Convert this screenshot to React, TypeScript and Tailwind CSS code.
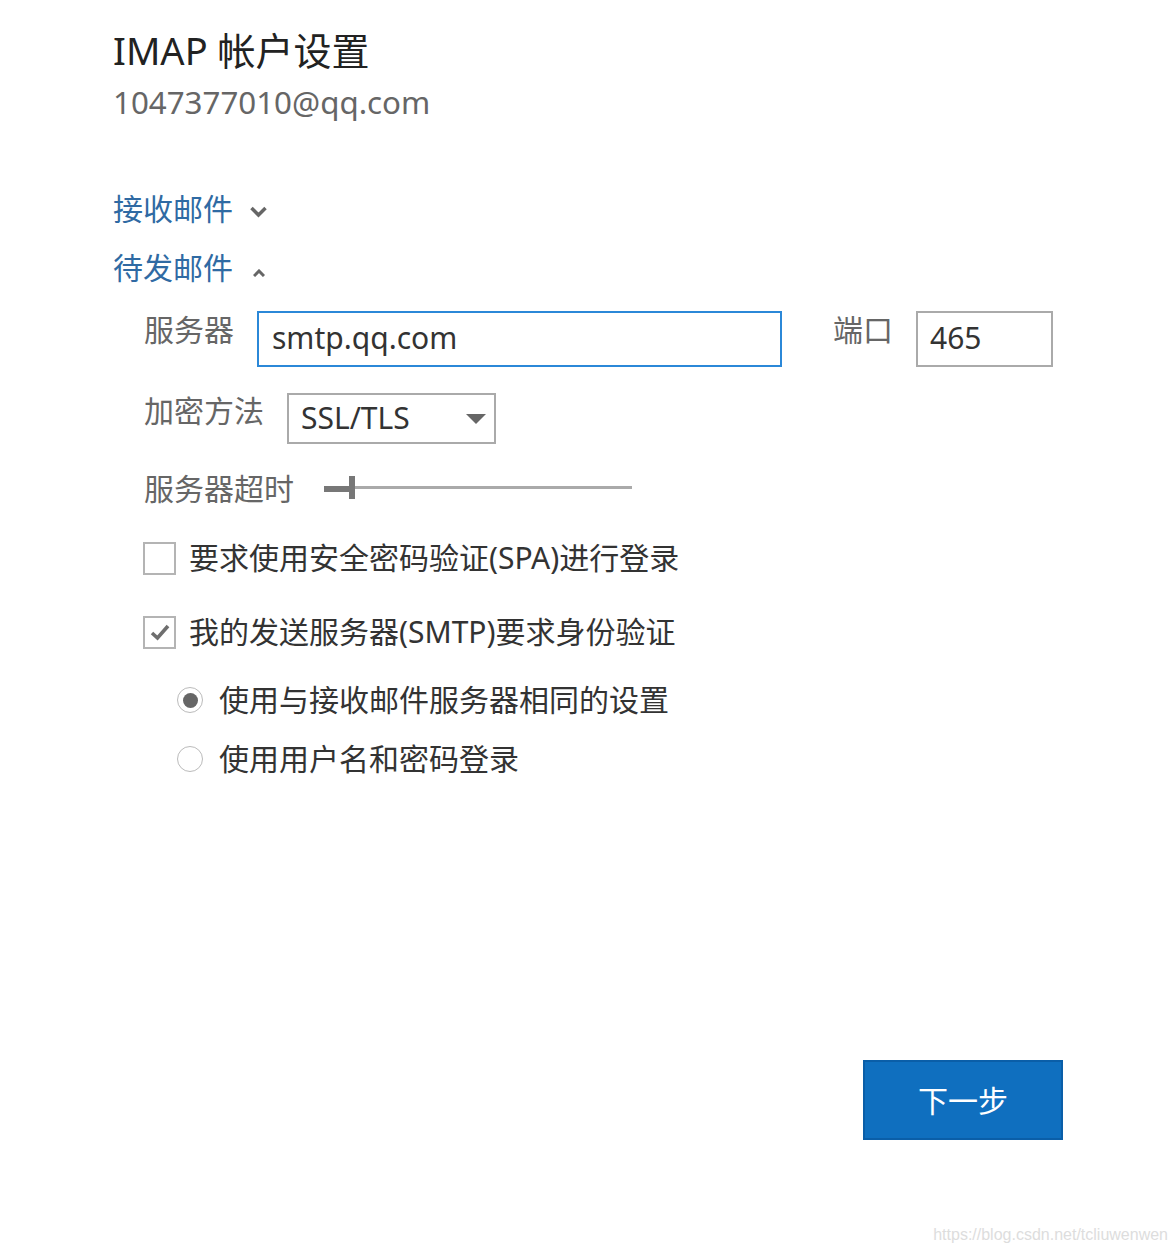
import React from "react";

export default function App() {
  return (
    <div className="relative w-[1176px] h-[1253px] bg-white overflow-hidden font-['Noto_Sans','Noto_Sans_CJK_SC',sans-serif]">
      <div className="flex flex-col pl-[113px] pt-[30px]">
        <div className="text-[38px] leading-[40px] text-[#222222] h-[40px]">IMAP 帐户设置</div>
        <div className="mt-[12px] text-[31.3px] leading-[40px] text-[#666666] h-[40px]">1047377010@qq.com</div>

        <div className="mt-[67px] flex items-center h-[40px]">
          <span className="text-[30px] leading-[40px] text-[#2f6aa3]">接收邮件</span>
          <svg className="ml-[17px] mt-[6px]" width="17" height="12" viewBox="0 0 17 12">
            <path d="M1.5 2 L8.5 9 L15.5 2" fill="none" stroke="#666666" strokeWidth="3.5" />
          </svg>
        </div>
        <div className="mt-[19px] flex items-center h-[40px]">
          <span className="text-[30px] leading-[40px] text-[#2f6aa3]">待发邮件</span>
          <svg className="ml-[20px] mt-[10px]" width="12" height="8" viewBox="0 0 12 8">
            <path d="M1 7 L6 2 L11 7" fill="none" stroke="#666666" strokeWidth="3" />
          </svg>
        </div>

        <div className="pl-[31px] flex flex-col">
          <div className="mt-[23px] flex items-start h-[56px]">
            <div className="w-[113px] text-[30px] leading-[38px] text-[#666666]">服务器</div>
            <div className="w-[525px] h-[56px] border-2 border-[#2b88d8] flex items-center pl-[13px] pb-[4px] text-[30px] text-[#333333]">
              smtp.qq.com
            </div>
            <div className="ml-[51px] w-[83px] text-[30px] leading-[38px] text-[#666666]">端口</div>
            <div className="w-[137px] h-[56px] border-2 border-[#aaaaaa] flex items-center pl-[12px] pb-[4px] text-[30px] text-[#333333]">
              465
            </div>
          </div>

          <div className="mt-[26px] flex items-start h-[51px]">
            <div className="w-[143px] -mt-[2px] text-[30px] leading-[40px] text-[#666666]">加密方法</div>
            <div className="w-[209px] h-[51px] border-2 border-[#aaaaaa] flex items-center justify-between pl-[12px] pr-[8px] text-[30px] text-[#333333]">
              <span className="-mt-[2px]">SSL/TLS</span>
              <svg width="20" height="10" viewBox="0 0 20 10">
                <path d="M0 0 L20 0 L10 10 Z" fill="#666666" />
              </svg>
            </div>
          </div>

          <div className="mt-[25px] flex items-center h-[40px]">
            <div className="w-[180px] text-[30px] leading-[40px] text-[#666666]">服务器超时</div>
            <div className="flex items-start h-[23px] w-[308px] -mt-[4px]">
              <div className="w-[25px] h-[6px] bg-[#777777] mt-[10px]" />
              <div className="w-[6px] h-[23px] bg-[#777777]" />
              <div className="flex-1 h-[3px] bg-[#aaaaaa] mt-[10px]" />
            </div>
          </div>

          <div className="mt-[32px] flex items-center h-[34px]">
            <div className="w-[33px] h-[33px] -ml-[1px] border-2 border-[#b4b4b4] bg-white shrink-0" />
            <span className="ml-[13px] text-[30px] leading-[40px] text-[#333333]">要求使用安全密码验证(SPA)进行登录</span>
          </div>

          <div className="mt-[40px] flex items-center h-[34px]">
            <div className="w-[33px] h-[33px] -ml-[1px] border-2 border-[#b4b4b4] bg-white shrink-0 flex items-center justify-center">
              <svg width="20" height="17" viewBox="0 0 20 17">
                <path d="M2 9 L7.5 14 L18 2" fill="none" stroke="#6e6e6e" strokeWidth="3.6" />
              </svg>
            </div>
            <span className="ml-[13px] text-[30px] leading-[40px] text-[#333333]">我的发送服务器(SMTP)要求身份验证</span>
          </div>

          <div className="pl-[33px] flex flex-col">
            <div className="mt-[33px] flex items-center h-[36px]">
              <div className="w-[26px] h-[26px] rounded-full border border-[#bbbbbb] flex items-center justify-center shrink-0">
                <div className="w-[15px] h-[15px] rounded-full bg-[#666666]" />
              </div>
              <span className="ml-[16px] text-[30px] leading-[40px] text-[#333333]">使用与接收邮件服务器相同的设置</span>
            </div>
            <div className="mt-[23px] flex items-center h-[36px]">
              <div className="w-[26px] h-[26px] rounded-full border border-[#bbbbbb] shrink-0" />
              <span className="ml-[16px] text-[30px] leading-[40px] text-[#333333]">使用用户名和密码登录</span>
            </div>
          </div>
        </div>
      </div>

      <div className="flex justify-end pr-[113px] mt-[283px]">
        <button className="w-[200px] h-[80px] bg-[#0f6fbf] border-2 border-[#0a5ea8] text-white text-[30px] flex items-center justify-center">
          下一步
        </button>
      </div>

      <div className="absolute right-[8px] bottom-[8px] text-[16px] leading-[20px] text-[#dddddd] font-['Liberation_Sans',sans-serif]">
        https://blog.csdn.net/tcliuwenwen
      </div>
    </div>
  );
}
